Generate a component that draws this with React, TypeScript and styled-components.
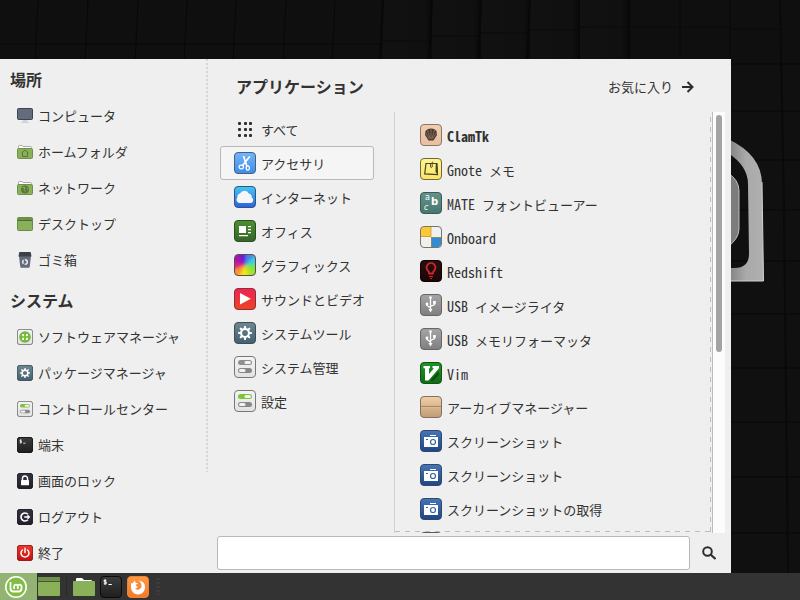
import React, { useId, useState } from "react";
import styled, { createGlobalStyle } from "styled-components";

const GlobalStyle = createGlobalStyle`
  *, *::before, *::after { box-sizing: border-box; }
  body {
    margin: 0;
    background: #0f0f0f;
    color: #333;
    font: 13px/20px "Noto Sans CJK JP", sans-serif;
  }
  button, input { font: inherit; color: inherit; }
  button { border: 0; background: none; padding: 0; margin: 0; text-align: left; }
  ul { list-style: none; margin: 0; padding: 0; }
  svg { display: block; flex: none; }
`;

/* ---------- layout ---------- */

const Desktop = styled.div`
  position: relative;
  min-height: 100vh;
  display: flex;
  flex-direction: column;
  justify-content: flex-end;
  overflow: hidden;
`;

const Backdrop = styled.svg`
  position: absolute;
  inset: 0;
  z-index: 0;
`;

const Menu = styled.main`
  position: relative;
  z-index: 1;
  display: flex;
  width: 100%;
  max-width: 731px;
  background: #efefef;
`;

const Sidebar = styled.nav`
  flex: none;
  width: 206px;
  padding: 3px 0 2px;
`;

const SidebarSection = styled.section`
  & + & { margin-top: 5px; }
`;

const Heading = styled.h2<{ $inset?: boolean }>`
  margin: 0;
  padding: 0 0 2px ${(p) => (p.$inset ? "28px" : "10px")};
  font-size: 16px;
  line-height: 34px;
  font-weight: 700;
`;

const PlaceButton = styled.button`
  display: flex;
  align-items: center;
  gap: 5px;
  width: 100%;
  height: 36px;
  padding-left: 17px;
`;

const DottedRule = styled.div`
  flex: none;
  width: 2px;
  margin-bottom: 101px;
  background: repeating-linear-gradient(#d4d4d4 0 2px, transparent 2px 4px);
`;

const Applications = styled.section`
  flex: 1;
  min-width: 0;
  display: flex;
  flex-direction: column;
`;

const Header = styled.header`
  display: flex;
  align-items: center;
  justify-content: space-between;
  height: 53px;
  padding: 2px 37px 0 0;
`;

const FavouritesButton = styled.button`
  display: flex;
  align-items: center;
  gap: 8px;
`;

const Browser = styled.div`
  flex: 1;
  display: flex;
  padding: 0 6px 0 12px;
`;

const Categories = styled.ul`
  flex: none;
  width: 154px;
`;

const CategoryButton = styled.button<{ $active: boolean }>`
  display: flex;
  align-items: center;
  gap: 5px;
  width: 100%;
  height: 34px;
  padding-left: 13px;
  border: 1px solid ${(p) => (p.$active ? "#b9b9b9" : "transparent")};
  border-radius: 3px;
  background: ${(p) => (p.$active ? "#f5f5f5" : "transparent")};
`;

const EntryLabel = styled.span`
  padding-top: 2px;
`;

const AppPane = styled.div`
  flex: 1;
  display: flex;
  min-width: 0;
  margin-left: 20px;
  border-left: 1px solid #d2d2d2;
`;

const AppViewport = styled.div`
  flex: 1;
  contain: size;
  overflow: hidden;
  position: relative;
  padding-top: 6px;
  border-right: 1px solid #bcbcbc;
`;

const OverflowHint = styled.div`
  position: absolute;
  inset: 0 1px 1px 0;
  pointer-events: none;
  background:
    repeating-linear-gradient(90deg, #bdbdbd 0 5px, transparent 5px 10px) bottom / 100% 1px no-repeat,
    repeating-linear-gradient(transparent 0 5px, #bdbdbd 5px 10px) right / 1px 100% no-repeat;
`;

const AppButton = styled.button<{ $bold?: boolean }>`
  display: flex;
  align-items: center;
  gap: 5px;
  width: 100%;
  height: 34px;
  padding-left: 25px;
  white-space: pre;
  font-weight: ${(p) => (p.$bold ? 700 : 400)};
`;

const Latin = styled.span`
  font-size: 14px;
  font-feature-settings: "hwid";
`;

const ScrollTrack = styled.div`
  flex: none;
  width: 12px;
  padding: 3px;
  background: #fcfcfc;
`;

const ScrollThumb = styled.div`
  height: 57%;
  border-radius: 3px;
  background: #a3a3a3;
`;

const SearchRow = styled.form`
  display: flex;
  align-items: center;
  gap: 12px;
  padding: 3px 15px 3px 9px;
`;

const SearchField = styled.input`
  flex: 1;
  min-width: 0;
  height: 34px;
  padding: 0 8px;
  border: 1px solid #b8b8b8;
  border-radius: 3px;
  background: #fff;
  outline: none;
`;

const Taskbar = styled.footer`
  position: relative;
  z-index: 1;
  display: flex;
  align-items: center;
  height: 27px;
  background: #333;
`;

const StartButton = styled.button`
  display: flex;
  align-items: center;
  width: 37px;
  height: 100%;
  padding-left: 4px;
  background: #92b372;
`;

const ShowDesktop = styled.button`
  margin-left: 1px;
`;

const Divider = styled.div`
  width: 1px;
  height: 19px;
  margin: 0 6px;
  background: #292929;
`;

const Launchers = styled.div`
  display: flex;
  gap: 5px;
`;

const Grip = styled.div`
  width: 4px;
  height: 17px;
  margin-left: 7px;
  background: repeating-linear-gradient(#3c3c3c 0 2px, transparent 2px 4px);
`;

/* ---------- icons ---------- */

type TileProps = {
  size?: number;
  from: string;
  to: string;
  stroke?: string;
  children?: React.ReactNode;
};

function Tile({ size = 22, from, to, stroke = "rgba(0,0,0,.5)", children }: TileProps) {
  const id = useId();
  return (
    <svg width={size} height={size} viewBox="0 0 22 22" aria-hidden="true">
      <defs>
        <linearGradient id={id} x1="0" y1="0" x2="0" y2="1">
          <stop offset="0" stopColor={from} />
          <stop offset="1" stopColor={to} />
        </linearGradient>
      </defs>
      <rect x=".5" y=".5" width="21" height="21" rx="3.5" fill={`url(#${id})`} stroke={stroke} strokeWidth={size < 22 ? 1.3 : 1} />
      {children}
    </svg>
  );
}

const Toggles = ({ top, size }: { top: string; size?: number }) => (
  <Tile size={size} from="#f4f4f4" to="#e2e2e2" stroke="#777">
    <rect x="4" y="4" width="14" height="5" rx="2.5" fill={top} />
    <rect x="10.500" y="5" width="6.500" height="3" rx="1.500" fill="#f2f2f2" />
    <rect x="4" y="12" width="14" height="5" rx="2.5" fill="#888" />
    <rect x="5" y="13" width="6.500" height="3" rx="1.500" fill="#f2f2f2" />
  </Tile>
);

const Gear = ({ size }: { size?: number }) => (
  <Tile size={size} from="#6f8791" to="#43606c" stroke="#39505a">
    <circle cx="11" cy="11" r="3.900" fill="none" stroke="#fff" strokeWidth="2" />
    {[0, 45, 90, 135, 180, 225, 270, 315].map((a) => (
      <path key={a} d="M9.700 6.800 10.200 4h1.600l.5 2.800z" fill="#fff" transform={`rotate(${a} 11 11)`} />
    ))}
  </Tile>
);

const Terminal = ({ size }: { size?: number }) => (
  <Tile size={size} from="#3d3d3d" to="#1e1e1e" stroke="#0b0b0b">
    <path d="M6.300 4.300H4.200v1.600h2v1.900H3.800M5.100 3.200v5.700M8.500 8.500h3.300" fill="none" stroke="#fff" strokeWidth="1" />
  </Tile>
);

const Computer = () => (
  <svg width="16" height="16" viewBox="0 0 16 16" aria-hidden="true">
    <path d="M6 12h4l.6 2H12v1H4v-1h1.400z" fill="#ccd3da" />
    <rect x=".5" y=".5" width="15" height="11" rx="1" fill="#646b7b" stroke="#3e4350" />
  </svg>
);

const SmallFolder = ({ children }: { children: React.ReactNode }) => (
  <svg width="16" height="16" viewBox="0 0 16 16" aria-hidden="true">
    <path d="M1.500 5V2.200q0-.7.8-.7H5q.6 0 1 1h7.500q1 0 1 1V5" fill="#fff" stroke="#aaa" />
    <rect x=".5" y="4.500" width="15" height="10" rx="1" fill="#8bb05a" stroke="#6e9048" />
    {children}
  </svg>
);

const DesktopIcon = () => (
  <svg width="16" height="16" viewBox="0 0 16 16" aria-hidden="true">
    <rect x=".5" y="1.500" width="15" height="13" rx="1" fill="#8bb05a" stroke="#6a8b45" />
    <path d="M1 2h14v2H1z" fill="#6f9148" />
    <path d="M1 4.500h14" stroke="#4e6932" />
  </svg>
);

const Trash = () => (
  <svg width="16" height="16" viewBox="0 0 16 16" aria-hidden="true">
    <path d="M2 4h12l-1.300 11q-.1.800-1 .8H4.300q-.9 0-1-.8z" fill="#646b7b" />
    <path d="M2.300 0h11.400l.8 4.500h-13z" fill="#3b4049" />
    <circle cx="8" cy="10" r="2.300" fill="none" stroke="#e9ebee" strokeWidth="1.500" strokeDasharray="3.600 1.200" />
  </svg>
);

const Software = () => (
  <Tile size={16} from="#f4f4f4" to="#e2e2e2" stroke="#777">
    <circle cx="11" cy="11" r="8" fill="#76b83a" />
    {[[8.4, 8.4], [13.6, 8.4], [8.4, 13.6], [13.6, 13.6]].map(([x, y]) => (
      <rect key={`${x}-${y}`} x={x - 1.4} y={y - 1.4} width="2.800" height="2.800" rx=".9" fill="#fff" />
    ))}
  </Tile>
);

const Lock = () => (
  <Tile size={16} from="#37323f" to="#231f2a" stroke="#17141c">
    <path d="M7.500 10V7.500a3.500 3.500 0 0 1 7 0V10" fill="none" stroke="#fff" strokeWidth="2" />
    <rect x="5.500" y="9.500" width="11" height="7.500" rx="1" fill="#fff" />
  </Tile>
);

const Logout = () => (
  <Tile size={16} from="#37323f" to="#231f2a" stroke="#17141c">
    <path d="M15 7.200a5.500 5.500 0 1 0 0 7.600" fill="none" stroke="#fff" strokeWidth="2.300" />
    <path d="M10 11h7M14.500 8.500 17 11l-2.500 2.500" fill="none" stroke="#fff" strokeWidth="1.800" />
  </Tile>
);

const Power = () => (
  <Tile size={16} from="#ee3a2c" to="#c40f0f" stroke="#8f1512">
    <path d="M7.500 6.800a5.500 5.500 0 1 0 7 0M11 4.500v6" fill="none" stroke="#fff" strokeWidth="2" strokeLinecap="round" />
  </Tile>
);

const AllGrid = () => (
  <svg width="22" height="22" viewBox="0 0 22 22" aria-hidden="true">
    {[5, 11, 17].flatMap((y) => [4, 10, 15].map((x) => <rect key={`${x}-${y}`} x={x} y={y - 1} width="3" height="3" rx="1" fill="#2e2e2e" />))}
  </svg>
);

const Scissors = () => (
  <Tile from="#77b4fb" to="#3f8de6" stroke="#43617f">
    <path d="M9.500 4 12.800 14M15.800 4.500 8.500 13.500" fill="none" stroke="#fff" strokeWidth="1.700" />
    <ellipse cx="7.300" cy="15" rx="2.200" ry="1.800" fill="none" stroke="#fff" strokeWidth="1.200" />
    <ellipse cx="13.800" cy="16" rx="1.600" ry="2.200" fill="none" stroke="#fff" strokeWidth="1.200" />
  </Tile>
);

const Cloud = () => (
  <Tile from="#44c7f4" to="#2a62e0" stroke="#31547f">
    <path d="M6 17a3.300 3.300 0 0 1-2.500-5.700A3 3 0 0 1 6 7.500a5 5 0 0 1 9 .2 3 3 0 0 1 2.700 3.700A3 3 0 0 1 16.500 17z" fill="#f6f6f6" />
  </Tile>
);

const Office = () => (
  <Tile from="#49922f" to="#376329" stroke="#2d4b24">
    <path d="M5 6h7v7H5zM14 6h3v1.200h-3zM14 9h3v1.200h-3zM14 12h3v1.200h-3zM5 15h9v1.200H5z" fill="#fff" />
  </Tile>
);

const colourWedges = ["#5a1fd4", "#4a86ea", "#38d0d8", "#7ee23a", "#a8e622", "#f8e31c", "#f9952a", "#e0207c", "#a012b0"];
const Graphics = () => (
  <svg width="22" height="22" viewBox="0 0 22 22" aria-hidden="true">
    <defs>
      <clipPath id="spectrum-clip"><rect x="1" y="1" width="20" height="20" rx="3" /></clipPath>
      <filter id="spectrum-soft"><feGaussianBlur stdDeviation="1.700" /></filter>
    </defs>
    <g clipPath="url(#spectrum-clip)">
      <rect width="22" height="22" fill="#b0509a" />
      <g filter="url(#spectrum-soft)">
        {colourWedges.map((c, i) => (
          <path key={c} d="M11 11 1 -12h20z" fill={c} transform={`rotate(${i * 40 - 10} 11 11)`} />
        ))}
      </g>
    </g>
    <rect x=".5" y=".5" width="21" height="21" rx="3.500" fill="none" stroke="#5b4a55" />
  </svg>
);

const Video = () => (
  <Tile from="#ee2358" to="#ee4423" stroke="#8c3034">
    <path d="M6 5v11.500L16.800 10.800z" fill="#fff" />
  </Tile>
);

const Clam = () => (
  <Tile from="#f1cdb0" to="#e9bf9f" stroke="#8a7769">
    <path d="M8.500 16.500 5 11 5.500 7 8 5l3-.6 3 .6 2.500 2 .5 4-3.500 5.500z" fill="#4b3a30" />
    <path d="M10.200 15 7.500 6M9 14.500 5.500 8.500M11.800 15l2.700-9M13 14.500l3.500-6M11 15V4.500" stroke="#a88d77" strokeWidth=".6" />
  </Tile>
);

const Note = () => (
  <Tile from="#fff490" to="#fbe564" stroke="#6f6a3a">
    <path d="M6 5.500h11l.5 11.200-12.800-.8z" fill="none" stroke="#45422e" strokeWidth="1.200" />
    <path d="M15.800 5.500H17l.7 11.300-2.200-3z" fill="#45422e" />
    <path d="M10.500 5v4q.8 1.300 1.700 0V4.700q0-.9 1-.9" fill="none" stroke="#45422e" strokeWidth=".9" />
  </Tile>
);

const Fonts = () => (
  <Tile from="#65938c" to="#46776f" stroke="#3b5a55">
    <g fill="#fff" fontFamily="DejaVu Sans">
      <text x="5" y="8" fontSize="8">a</text>
      <text x="11" y="13" fontSize="10" fontWeight="700">b</text>
      <text x="4" y="18" fontSize="8" fontStyle="italic">c</text>
    </g>
  </Tile>
);

const Onboard = () => (
  <svg width="22" height="22" viewBox="0 0 22 22" aria-hidden="true">
    <rect x=".5" y=".5" width="21" height="21" rx="3.500" fill="#f0f0f0" />
    <path d="M4 1h7v10H1V4q0-3 3-3z" fill="#fcc934" />
    <path d="M11 11h10v7q0 3-3 3h-7z" fill="#338bd0" />
    <path d="M1 10.500h10V1M11.500 21v-9.500H21" fill="none" stroke="#b98d22" strokeOpacity=".6" />
    <rect x=".5" y=".5" width="21" height="21" rx="3.500" fill="none" stroke="#77746c" />
  </svg>
);

const Redshift = () => (
  <Tile from="#261012" to="#1b0507" stroke="#120304">
    <path d="M9.200 13.500q0-1.700-1.500-3.100a4.400 4.400 0 1 1 6.600 0q-1.500 1.400-1.500 3.100z" fill="none" stroke="#d2262b" strokeWidth="1.900" />
    <path d="M9 16.500h4M10 18.500h2" stroke="#d2262b" strokeWidth="1" />
  </Tile>
);

const Usb = () => (
  <Tile from="#a5a5a5" to="#7f7f7f" stroke="#676767">
    <path d="M10.500 3.500V17M10.500 14 7 11.500V9M10.500 12.500l4-2V8" fill="none" stroke="#fff" strokeWidth="1.300" />
    <circle cx="10.500" cy="3.500" r="1.300" fill="#fff" />
    <path d="M8.500 15h4l-2 3.500z" fill="#fff" />
    <circle cx="7" cy="10" r="1.400" fill="#fff" />
    <rect x="13" y="7" width="2.800" height="2.800" fill="#fff" />
  </Tile>
);

const Vim = () => (
  <Tile from="#1f9426" to="#0c6e12" stroke="#164f1a">
    <path d="m10 19 8.500-10L19 13l-6 6z" fill="#0b5010" />
    <path d="M3.500 4H10v2.200H9V12l5-5.800h-1.500V4H19v2.200L8.500 18.500H5V6.200H3.500z" fill="#fff" />
  </Tile>
);

const Archive = () => (
  <Tile from="#f0d0a6" to="#c29b78" stroke="#80705d">
    <path d="M1 11.500h20" stroke="#dcb993" />
    <path d="M1 10.500h20" stroke="#a5865f" />
  </Tile>
);

const Camera = () => (
  <Tile from="#4675b8" to="#1d4687" stroke="#334866">
    <path d="M4 7h14v10H4zM10 5h6v1h-6z" fill="#fff" />
    <circle cx="13" cy="12" r="2.500" fill="#fff" stroke="#3763a4" strokeWidth="1.200" />
    <path d="M6 9.500h2" stroke="#3763a4" />
  </Tile>
);

const Purple = () => <Tile from="#8c79a6" to="#5a4a76" stroke="#5c5470" />;

const Arrow = () => (
  <svg width="13" height="12" viewBox="0 0 13 12" aria-hidden="true">
    <path d="M1 6h10.500M6.500 1 11.500 6l-5 5" fill="none" stroke="#2e2e2e" strokeWidth="2" />
  </svg>
);

const Magnifier = () => (
  <svg width="14" height="14" viewBox="0 0 14 14" aria-hidden="true">
    <circle cx="5.500" cy="5.500" r="4.300" fill="none" stroke="#2e2e2e" strokeWidth="2" />
    <path d="m8.500 8.500 5 4.500" stroke="#2e2e2e" strokeWidth="2.200" />
  </svg>
);

const Mint = () => (
  <svg width="24" height="24" viewBox="0 0 24 24" aria-hidden="true">
    <circle cx="12" cy="12" r="10.200" fill="#80bd43" stroke="#fff" strokeWidth="1.600" />
    <path d="M6.500 7v6.500q0 3 3 3h5q3 0 3-3V11a1.900 1.900 0 0 0-3.700 0v3M13.800 11a1.900 1.900 0 0 0-3.700 0v3" fill="none" stroke="#fff" strokeWidth="1.800" />
  </svg>
);

const BarDesktop = () => (
  <svg width="22" height="20" viewBox="0 0 22 20" aria-hidden="true">
    <rect width="22" height="19" rx="1" fill="#8ab05a" />
    <path d="M0 0h22v4H0z" fill="#6f9149" />
    <path d="M0 4.500h22" stroke="#44592f" />
  </svg>
);

const BarFolder = () => (
  <svg width="22" height="22" viewBox="0 0 22 22" aria-hidden="true">
    <path d="M3 6V3q0-1 1-1h5l2 2h7q1 0 1 1v1z" fill="#fff" />
    <rect y="5" width="22" height="15" rx="1" fill="#8ab05a" />
  </svg>
);

const Firefox = () => (
  <Tile from="#fb9a45" to="#f37a29" stroke="#f08132">
    <path d="M4 7q1 .8 2 0 .8-2 2-2.500-.2 1.500 1 2.500h2q-1 1.500-2.500 2 .5 2 2.500 1.800-1 1.700-3 1.200 1.500 2.200 4 1.500 3.500-1.500 2-6-.3-1.800-2.500-3 6.500.5 6.500 7a7 7 0 0 1-14 0Q4 9 4 7z" fill="#fff" />
  </Tile>
);

/* ---------- wallpaper ---------- */

const seamTops = [38, 88, 138, 187, 236, 286, 335, 383, 432, 481, 530, 579, 629, 680, 730, 780];
const shelfYs = [44, 44, 44, 44, 44, 44, 44, 41, 36, 33, 30, 27, 27, 27, 29];
const rightSeams = [64, 111, 160, 210, 261, 314, 368, 422, 477, 533];

const Wallpaper = () => (
  <Backdrop width="100%" height="100%" aria-hidden="true">
    <defs>
      <linearGradient id="metal" x1="0" y1="0" x2="1" y2="0">
        <stop offset="0" stopColor="#7f7f7f" />
        <stop offset=".5" stopColor="#a9a9a9" />
        <stop offset="1" stopColor="#b0b0b0" />
      </linearGradient>
      <linearGradient id="tileShade" x1="0" y1="0" x2="1" y2="0">
        <stop offset="0" stopColor="#111" />
        <stop offset=".85" stopColor="#101010" />
        <stop offset="1" stopColor="#0a0a0a" />
      </linearGradient>
    </defs>
    <rect width="100%" height="100%" fill="#0f0f0f" />
    <path d="M0 44h335" stroke="#0a0a0a" />
    {seamTops.slice(0, 15).map((x, i) => (
      <React.Fragment key={x}>
        {i > 6 && i < 12 && <rect x={x} width={seamTops[i + 1] - x} height="64" fill="url(#tileShade)" />}
        <path d={`M${x} 0 L${x - (i < 11 ? 3 : 0)} 64`} stroke="#080808" strokeWidth={i > 6 && i < 13 ? 2 : 1} />
        <path d={`M${x} ${shelfYs[i]}H${seamTops[i + 1]}`} stroke="#0a0a0a" />
      </React.Fragment>
    ))}
    <rect x="731" y="62" width="100%" height="512" fill="#101010" />
    {rightSeams.map((y) => (
      <path key={y} d={`M731 ${y}H3000`} stroke="#070707" />
    ))}
    <path d="M780 0 784 210 788 573" fill="none" stroke="#0a0a0a" strokeWidth="2" />
    <path d="M728 139q34 16 34 45l1.500 97H728v-13h6q15 0 15-14l-1-70q0-18-20-31z" fill="url(#metal)" />
    <path d="M762 182 763.500 281H731" fill="none" stroke="#d0d0d0" />
    <path d="M728 173q11 7 11 18v38q0 9-11 18z" fill="#7c7c7c" stroke="#bdbdbd" />
  </Backdrop>
);

/* ---------- data ---------- */

const places = [
  { label: "コンピュータ", icon: <Computer /> },
  { label: "ホームフォルダ", icon: <SmallFolder><path d="M4.500 9 8 6l3.500 3M5.500 8.500v4h5v-4" fill="none" stroke="#587538" /></SmallFolder> },
  { label: "ネットワーク", icon: <SmallFolder><circle cx="8" cy="9.500" r="4" fill="#5b773b" /><path d="M5.500 7.500 8 7.500 7 9.500l1.500 2M10 7.500l1 2" fill="none" stroke="#8bb05a" /></SmallFolder> },
  { label: "デスクトップ", icon: <DesktopIcon /> },
  { label: "ゴミ箱", icon: <Trash /> },
];

const system = [
  { label: "ソフトウェアマネージャ", icon: <Software /> },
  { label: "パッケージマネージャ", icon: <Gear size={16} /> },
  { label: "コントロールセンター", icon: <Toggles size={16} top="#7dc43c" /> },
  { label: "端末", icon: <Terminal size={16} /> },
  { label: "画面のロック", icon: <Lock /> },
  { label: "ログアウト", icon: <Logout /> },
  { label: "終了", icon: <Power /> },
];

const categories = [
  { label: "すべて", icon: <AllGrid /> },
  { label: "アクセサリ", icon: <Scissors /> },
  { label: "インターネット", icon: <Cloud /> },
  { label: "オフィス", icon: <Office /> },
  { label: "グラフィックス", icon: <Graphics /> },
  { label: "サウンドとビデオ", icon: <Video /> },
  { label: "システムツール", icon: <Gear /> },
  { label: "システム管理", icon: <Toggles top="#8f8f8f" /> },
  { label: "設定", icon: <Toggles top="#7dc43c" /> },
];

const apps: { latin?: string; label?: string; icon: React.ReactNode; bold?: boolean }[] = [
  { latin: "ClamTk", icon: <Clam />, bold: true },
  { latin: "Gnote ", label: "メモ", icon: <Note /> },
  { latin: "MATE ", label: "フォントビューアー", icon: <Fonts /> },
  { latin: "Onboard", icon: <Onboard /> },
  { latin: "Redshift", icon: <Redshift /> },
  { latin: "USB ", label: "イメージライタ", icon: <Usb /> },
  { latin: "USB ", label: "メモリフォーマッタ", icon: <Usb /> },
  { latin: "Vim", icon: <Vim /> },
  { label: "アーカイブマネージャー", icon: <Archive /> },
  { label: "スクリーンショット", icon: <Camera /> },
  { label: "スクリーンショット", icon: <Camera /> },
  { label: "スクリーンショットの取得", icon: <Camera /> },
  { icon: <Purple /> },
];

const SideList = ({ title, items }: { title: string; items: { label: string; icon: React.ReactNode }[] }) => (
  <SidebarSection>
    <Heading>{title}</Heading>
    <ul>
      {items.map((item) => (
        <li key={item.label}>
          <PlaceButton type="button">{item.icon}{item.label}</PlaceButton>
        </li>
      ))}
    </ul>
  </SidebarSection>
);

export default function App() {
  const [active, setActive] = useState("アクセサリ");
  const [query, setQuery] = useState("");
  return (
    <>
      <GlobalStyle />
      <Desktop>
        <Wallpaper />
        <Menu>
          <Sidebar>
            <SideList title="場所" items={places} />
            <SideList title="システム" items={system} />
          </Sidebar>
          <DottedRule />
          <Applications>
            <Header>
              <Heading $inset>アプリケーション</Heading>
              <FavouritesButton type="button">お気に入り<Arrow /></FavouritesButton>
            </Header>
            <Browser>
              <Categories>
                {categories.map((c) => (
                  <li key={c.label}>
                    <CategoryButton type="button" $active={c.label === active} onClick={() => setActive(c.label)}>
                      {c.icon}
                      <EntryLabel>{c.label}</EntryLabel>
                    </CategoryButton>
                  </li>
                ))}
              </Categories>
              <AppPane>
                <AppViewport>
                  <ul>
                    {apps.map((a, i) => (
                      <li key={i}>
                        <AppButton type="button" $bold={a.bold}>
                          {a.icon}
                          <EntryLabel>{a.latin && <Latin>{a.latin}</Latin>}{a.label}</EntryLabel>
                        </AppButton>
                      </li>
                    ))}
                  </ul>
                  <OverflowHint />
                </AppViewport>
                <ScrollTrack><ScrollThumb /></ScrollTrack>
              </AppPane>
            </Browser>
            <SearchRow onSubmit={(e) => e.preventDefault()}>
              <SearchField type="text" aria-label="検索" value={query} onChange={(e) => setQuery(e.target.value)} />
              <button type="submit" aria-label="検索"><Magnifier /></button>
            </SearchRow>
          </Applications>
        </Menu>
        <Taskbar>
          <StartButton type="button" aria-label="メニュー"><Mint /></StartButton>
          <ShowDesktop type="button" aria-label="デスクトップを表示"><BarDesktop /></ShowDesktop>
          <Divider />
          <Launchers>
            <button type="button" aria-label="ファイル"><BarFolder /></button>
            <button type="button" aria-label="端末"><Terminal /></button>
            <button type="button" aria-label="Firefox"><Firefox /></button>
          </Launchers>
          <Grip />
        </Taskbar>
      </Desktop>
    </>
  );
}
